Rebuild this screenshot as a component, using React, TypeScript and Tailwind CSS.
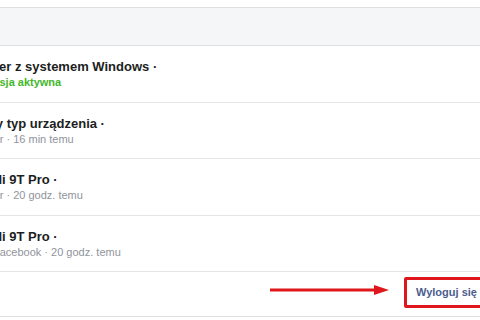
import React from "react";

type Session = {
  device: string;
  deviceShift: string;
  meta: React.ReactNode;
  metaShift: string;
};

const sessions: Session[] = [
  {
    device: "Komputer z systemem Windows",
    deviceShift: "-ml-[50px]",
    meta: <span className="text-[#42b72a] font-bold">Sesja aktywna</span>,
    metaShift: "-ml-[14px]",
  },
  {
    device: "Nieznany typ urządzenia",
    deviceShift: "-ml-[54px]",
    meta: <span>Messenger · 16 min temu</span>,
    metaShift: "-ml-[51px]",
  },
  {
    device: "Xiaomi Mi 9T Pro",
    deviceShift: "-ml-[55px]",
    meta: <span>Messenger · 20 godz. temu</span>,
    metaShift: "-ml-[51px]",
  },
  {
    device: "Xiaomi Mi 9T Pro",
    deviceShift: "-ml-[55px]",
    meta: <span>Facebook · 20 godz. temu</span>,
    metaShift: "-ml-[7px]",
  },
];

export default function App() {
  return (
    <div className="w-[480px] h-[320px] overflow-hidden bg-white font-['Liberation_Sans',Arial,sans-serif] relative">
      <div className="h-[7px] bg-white" />
      {/* header */}
      <div className="h-[39px] bg-[#f5f6f7] border-y border-[#dddfe2]" />

      {/* sessions */}
      {sessions.map((s, i) => (
        <div
          key={i}
          className={`${i % 2 === 0 ? "h-[57px]" : "h-[56px]"} border-b border-[#e5e6e9] pt-[12px] whitespace-nowrap`}
        >
          <div className={`${s.deviceShift} text-[13px] leading-[17px] font-bold text-[#1c1e21]`}>
            {s.device} ·
          </div>
          <div className={`${s.metaShift} text-[11px] leading-[15px] text-[#90949c]`}>{s.meta}</div>
        </div>
      ))}

      {/* footer */}
      <div className="h-[45px] border-b border-[#dddfe2] flex items-start justify-end pt-[5px]">
        <button className="h-[31px] w-[100px] -mr-[24px] border-[3px] border-[#e0161d] bg-white rounded-[2px] pl-[9px] text-left whitespace-nowrap text-[11px] font-bold text-[#4b5d8f]">
          Wyloguj się ze wszystkich sesji
        </button>
      </div>

      {/* annotation arrow */}
      <svg className="absolute left-[268px] top-[284px]" width="124" height="12" viewBox="0 0 124 12">
        <line x1="2" y1="6" x2="110" y2="6" stroke="#e0161d" strokeWidth="3" />
        <polygon points="106,1 121,6 106,11" fill="#e0161d" />
      </svg>
    </div>
  );
}
